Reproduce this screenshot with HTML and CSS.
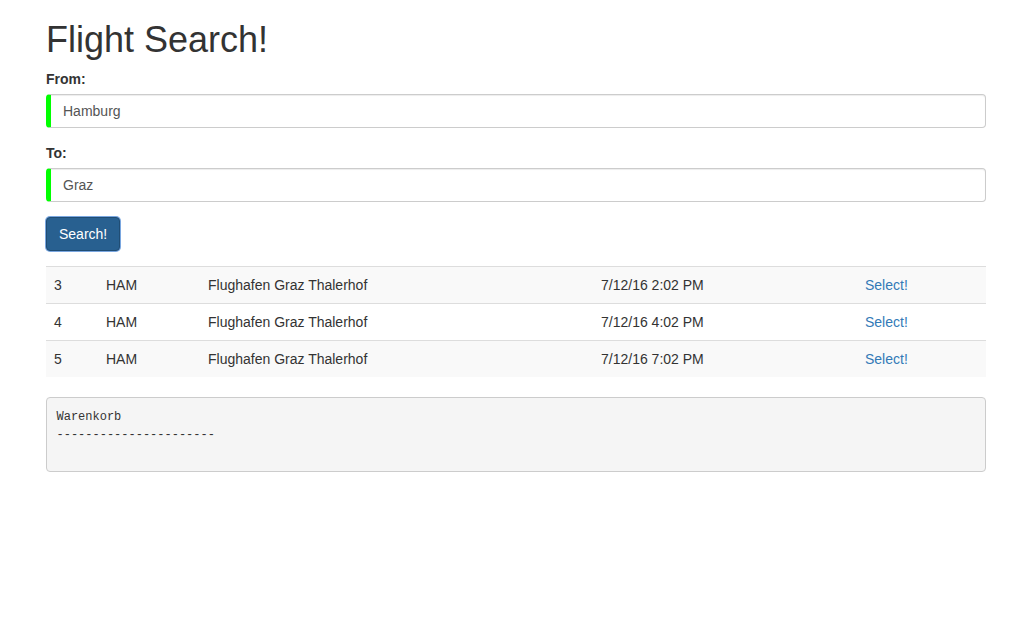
FILE: index.html
```html
<!DOCTYPE html>
<html>
<head>
<meta charset="utf-8">
<link rel="stylesheet" href="styles.css">
</head>
<body>
<div class="container">
  <h1 class="title">Flight Search!</h1>
  <form class="form">
    <div class="form-group">
      <label class="label">From:</label>
      <input class="input" value="Hamburg">
    </div>
    <div class="form-group">
      <label class="label">To:</label>
      <input class="input" value="Graz">
    </div>
    <div class="form-group">
      <button type="button" class="btn">Search!</button>
    </div>
  </form>
  <table class="table">
    <tbody>
      <tr class="odd"><td class="c1">3</td><td class="c2">HAM</td><td class="c3">Flughafen Graz Thalerhof</td><td class="c4">7/12/16 2:02 PM</td><td class="c5"><a class="link">Select!</a></td></tr>
      <tr><td class="c1">4</td><td class="c2">HAM</td><td class="c3">Flughafen Graz Thalerhof</td><td class="c4">7/12/16 4:02 PM</td><td class="c5"><a class="link">Select!</a></td></tr>
      <tr class="odd"><td class="c1">5</td><td class="c2">HAM</td><td class="c3">Flughafen Graz Thalerhof</td><td class="c4">7/12/16 7:02 PM</td><td class="c5"><a class="link">Select!</a></td></tr>
    </tbody>
  </table>
  <pre class="pre">Warenkorb
----------------------
</pre>
</div>
</body>
</html>
```
FILE: styles.css
```css
* { box-sizing: border-box; }
html, body { margin: 0; padding: 0; }
body {
  font-family: "Liberation Sans", Arial, sans-serif;
  font-size: 14px;
  line-height: 1.42857143;
  color: #333;
  background: #fff;
}
.container {
  width: 970px;
  margin: 0 auto;
  padding: 0 15px;
}
.title {
  font-size: 36px;
  font-weight: 500;
  line-height: 39px;
  margin: 20px 0 10px;
  color: #333;
}
.form { margin: 0; }
.form-group { margin-bottom: 15px; }
.label {
  display: block;
  font-weight: 700;
  margin-bottom: 5px;
}
.input {
  display: block;
  width: 100%;
  height: 34px;
  padding: 6px 12px;
  font-family: inherit;
  font-size: 14px;
  line-height: 1.42857143;
  color: #555;
  background: #fff;
  border: 1px solid #ccc;
  border-left: 5px solid #00ff00;
  border-radius: 4px;
  box-shadow: inset 0 1px 1px rgba(0,0,0,.075);
}
.btn {
  display: inline-block;
  height: 34px;
  padding: 6px 12px;
  font-family: inherit;
  font-size: 14px;
  line-height: 1.42857143;
  color: #fff;
  background: #286090;
  border: 1px solid #204d74;
  border-radius: 4px;
  box-shadow: 0 0 0 1px #7aa7e0;
}
.table {
  width: 100%;
  border-collapse: collapse;
  border-spacing: 0;
  margin-bottom: 20px;
}
.table td {
  padding: 8px;
  line-height: 1.42857143;
  vertical-align: top;
  border-top: 1px solid #ddd;
}
.table tr.odd { background: #f9f9f9; }
.c1 { width: 52px; }
.c2 { width: 102px; }
.c3 { width: 393px; }
.c4 { width: 264px; }
.c5 { width: 129px; }
.link { color: #337ab7; text-decoration: none; }
.pre {
  display: block;
  height: 75px;
  margin: 0 0 10px;
  padding: 9.5px;
  font-family: "Liberation Mono", "DejaVu Sans Mono", monospace;
  font-size: 12px;
  line-height: 18.57px;
  color: #333;
  background: #f5f5f5;
  border: 1px solid #ccc;
  border-radius: 4px;
  white-space: pre;
}
```
